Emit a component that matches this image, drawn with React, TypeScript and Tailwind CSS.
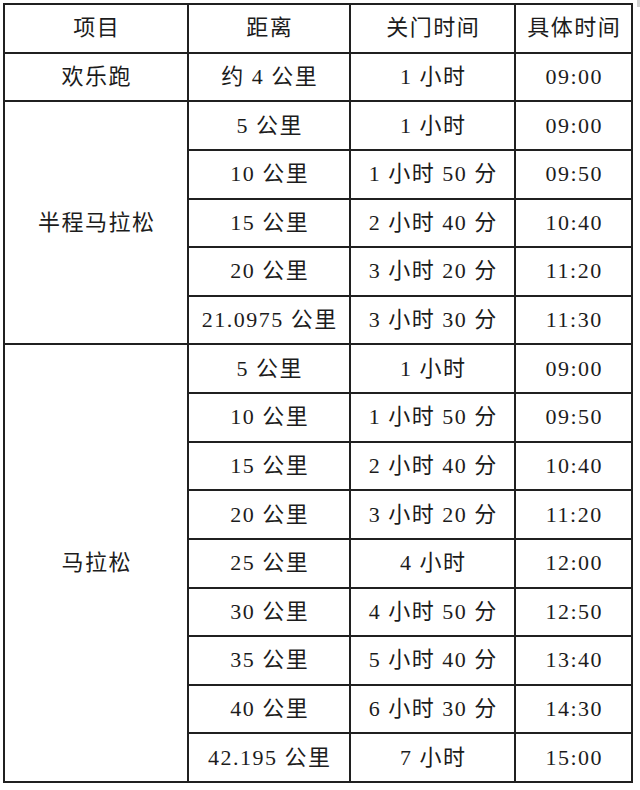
const header = ["项目", "距离", "关门时间", "具体时间"];

type Row = [string, string, string];

const halfRows: Row[] = [
  ["5 公里", "1 小时", "09:00"],
  ["10 公里", "1 小时 50 分", "09:50"],
  ["15 公里", "2 小时 40 分", "10:40"],
  ["20 公里", "3 小时 20 分", "11:20"],
  ["21.0975 公里", "3 小时 30 分", "11:30"],
];

const fullRows: Row[] = [
  ["5 公里", "1 小时", "09:00"],
  ["10 公里", "1 小时 50 分", "09:50"],
  ["15 公里", "2 小时 40 分", "10:40"],
  ["20 公里", "3 小时 20 分", "11:20"],
  ["25 公里", "4 小时", "12:00"],
  ["30 公里", "4 小时 50 分", "12:50"],
  ["35 公里", "5 小时 40 分", "13:40"],
  ["40 公里", "6 小时 30 分", "14:30"],
  ["42.195 公里", "7 小时", "15:00"],
];

function Cell({ children, className = "" }: { children: React.ReactNode; className?: string }) {
  return (
    <div className={`flex items-center justify-center bg-white whitespace-pre ${className}`}>
      <span className="pl-[1.5px]">{children}</span>
    </div>
  );
}

function Group({ name, rows }: { name: string; rows: Row[] }) {
  const span = rows.length === 5 ? "row-span-5" : "row-span-9";
  return (
    <>
      <Cell className={span}>{name}</Cell>
      {rows.map((row, i) => (
        <div key={i} className="contents">
          {row.map((text, j) => (
            <Cell key={j}>{text}</Cell>
          ))}
        </div>
      ))}
    </>
  );
}

export default function App() {
  return (
    <div className="relative h-[790px] w-[640px] bg-white">
      <div className="absolute right-0 top-0 h-[7px] w-[3px] bg-[#d0d0d0]" />
      <div
        className="ml-[3px] pt-[3px] text-[22px] leading-none tracking-[1.5px] text-[#1c1c1c]"
        style={{ fontFamily: '"Liberation Serif", "Noto Sans CJK SC", serif' }}
      >
        <div className="grid w-[630px] grid-cols-[182px_160px_163px_115px] grid-rows-[repeat(16,46.625px)] gap-[2px] bg-[#202020] p-[2px]">
          {header.map((h) => (
            <Cell key={h}>{h}</Cell>
          ))}
          <Cell>欢乐跑</Cell>
          <Cell>约 4 公里</Cell>
          <Cell>1 小时</Cell>
          <Cell>09:00</Cell>
          <Group name="半程马拉松" rows={halfRows} />
          <Group name="马拉松" rows={fullRows} />
        </div>
      </div>
    </div>
  );
}
